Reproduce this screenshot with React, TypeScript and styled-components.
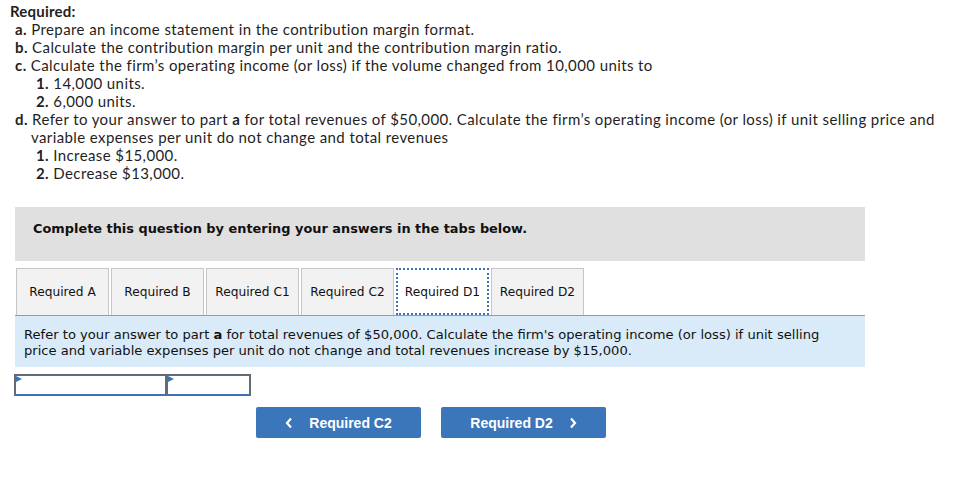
import React from "react";
import styled, { createGlobalStyle } from "styled-components";

const GlobalStyle = createGlobalStyle`
  html, body {
    margin: 0;
    padding: 0;
    background: #ffffff;
  }
  body {
    font-family: Lato, "Open Sans", sans-serif;
    color: #1f1f1f;
  }
`;

const Page = styled.div`
  padding: 2px 0 0 10px;
  width: 955px;
`;

const Heading = styled.div`
  font-size: 15px;
  font-weight: 700;
  letter-spacing: 0.2px;
  line-height: 18px;
`;

const Item = styled.div<{ indent: number }>`
  font-size: 15px;
  letter-spacing: 0.4px;
  line-height: 18px;
  padding-left: ${(p) => p.indent}px;
  white-space: nowrap;
  & b {
    font-weight: 700;
  }
`;

const Wrap = styled.div`
  padding-left: 16px;
`;

const Instructions = styled.div`
  margin: 25px 0 0 5px;
  width: 850px;
`;

const Banner = styled.div`
  height: 54px;
  box-sizing: border-box;
  background: #e0e0e0;
  padding: 14px 0 0 18px;
  font-family: "DejaVu Sans", Verdana, sans-serif;
  font-size: 12.9px;
  line-height: 16px;
  font-weight: 700;
  color: #111;
`;

const TabRow = styled.div`
  display: flex;
  gap: 2px;
  margin-top: 7px;
  padding-left: 1px;
`;

const Tab = styled.div<{ active?: boolean }>`
  width: 93px;
  height: 47px;
  box-sizing: border-box;
  display: flex;
  align-items: center;
  justify-content: center;
  font-family: "DejaVu Sans", Verdana, sans-serif;
  font-size: 12.2px;
  color: #111;
  background: ${(p) => (p.active ? "#ffffff" : "#f2f2f2")};
  border: ${(p) => (p.active ? "2px dotted #3d74b8" : "1px solid #c6c6c6")};
  border-bottom: ${(p) => (p.active ? "2px dotted #3d74b8" : "none")};
  margin-bottom: ${(p) => (p.active ? "-1px" : "0")};
  position: relative;
  z-index: ${(p) => (p.active ? 1 : 0)};
`;

const Panel = styled.div`
  border-top: 1px solid #9a9a9a;
  background: #d9ebf8;
  padding: 11px 9px 8px;
  font-family: "DejaVu Sans", Verdana, sans-serif;
  font-size: 13.1px;
  line-height: 16px;
  color: #111;
`;

const InputRow = styled.div`
  display: flex;
  margin-top: 7px;
  margin-left: -1px;
`;

const Cell = styled.div<{ w: number }>`
  width: ${(p) => p.w}px;
  height: 22px;
  box-sizing: border-box;
  border: 1px solid #5f6a74;
  box-shadow: inset 0 0 0 1px #3d74b8;
  background: #fff;
  position: relative;
  & + & {
    margin-left: -1px;
  }
  &::before {
    content: "";
    position: absolute;
    left: 1px;
    top: 1px;
    border-left: 6px solid #3d74b8;
    border-top: 3px solid transparent;
    border-bottom: 3px solid transparent;
  }
`;

const NavRow = styled.div`
  display: flex;
  gap: 20px;
  margin: 11px 0 0 241px;
`;

const NavButton = styled.div`
  width: 165px;
  height: 31px;
  background: #3b76bb;
  border-radius: 2px;
  display: flex;
  align-items: center;
  justify-content: center;
  gap: 16px;
  color: #fff;
  font-family: "Liberation Sans", Arial, sans-serif;
  font-size: 14px;
  font-weight: 700;
`;

const Chevron = ({ dir }: { dir: "left" | "right" }) => (
  <svg width="8" height="12" viewBox="0 0 8 12">
    <path
      d={dir === "left" ? "M6 1.5 L2 6 L6 10.5" : "M2 1.5 L6 6 L2 10.5"}
      fill="none"
      stroke="#fff"
      strokeWidth="2.2"
    />
  </svg>
);

const tabs = ["Required A", "Required B", "Required C1", "Required C2", "Required D1", "Required D2"];

export default function App() {
  return (
    <>
      <GlobalStyle />
      <Page>
        <Heading>Required:</Heading>
        <Item indent={5}><b>a.</b> Prepare an income statement in the contribution margin format.</Item>
        <Item indent={5}><b>b.</b> Calculate the contribution margin per unit and the contribution margin ratio.</Item>
        <Item indent={5}><b>c.</b> Calculate the firm’s operating income (or loss) if the volume changed from 10,000 units to</Item>
        <Item indent={26}><b>1.</b> 14,000 units.</Item>
        <Item indent={26}><b>2.</b> 6,000 units.</Item>
        <Item indent={5}>
          <b>d.</b> Refer to your answer to part <b>a</b> for total revenues of $50,000. Calculate the firm’s operating income (or loss) if unit selling price and
        </Item>
        <Wrap>
          <Item indent={5}>variable expenses per unit do not change and total revenues</Item>
          <Item indent={10}><b>1.</b> Increase $15,000.</Item>
          <Item indent={10}><b>2.</b> Decrease $13,000.</Item>
        </Wrap>
        <Instructions>
          <Banner>Complete this question by entering your answers in the tabs below.</Banner>
          <TabRow>
            {tabs.map((t) => (
              <Tab key={t} active={t === "Required D1"}>{t}</Tab>
            ))}
          </TabRow>
          <Panel>
            Refer to your answer to part <b>a</b> for total revenues of $50,000. Calculate the firm's operating income (or loss) if unit selling
            <br />
            price and variable expenses per unit do not change and total revenues increase by $15,000.
          </Panel>
          <InputRow>
            <Cell w={153} />
            <Cell w={85} />
          </InputRow>
          <NavRow>
            <NavButton>
              <Chevron dir="left" />
              Required C2
            </NavButton>
            <NavButton>
              Required D2
              <Chevron dir="right" />
            </NavButton>
          </NavRow>
        </Instructions>
      </Page>
    </>
  );
}
